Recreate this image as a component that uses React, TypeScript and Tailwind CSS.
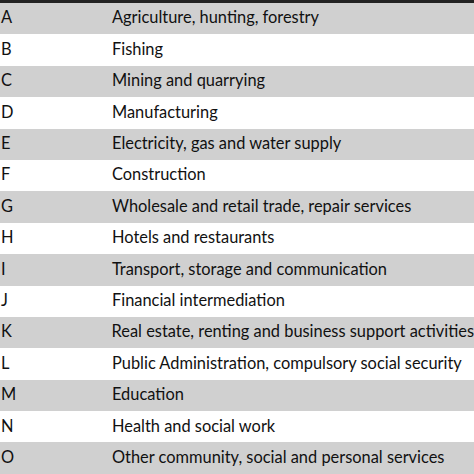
const sectors: [string, string][] = [
  ["A", "Agriculture, hunting, forestry"],
  ["B", "Fishing"],
  ["C", "Mining and quarrying"],
  ["D", "Manufacturing"],
  ["E", "Electricity, gas and water supply"],
  ["F", "Construction"],
  ["G", "Wholesale and retail trade, repair services"],
  ["H", "Hotels and restaurants"],
  ["I", "Transport, storage and communication"],
  ["J", "Financial intermediation"],
  ["K", "Real estate, renting and business support activities"],
  ["L", "Public Administration, compulsory social security"],
  ["M", "Education"],
  ["N", "Health and social work"],
  ["O", "Other community, social and personal services"],
];

export default function App() {
  return (
    <div className="w-[474px] h-[474px] overflow-hidden bg-white text-[#111] font-['Lato',sans-serif] text-[16.4px] leading-none">
      {/* top rule */}
      <div className="h-[3px] bg-[#222]" />

      {sectors.map(([code, name], i) => (
        <div
          key={code}
          className={`flex items-center h-[31.4px] pb-[2px] whitespace-nowrap ${
            i % 2 === 0 ? "bg-[#d0d0d0]" : "bg-white"
          }`}
        >
          <span className="w-[112px] pl-[1px]">{code}</span>
          <span>{name}</span>
        </div>
      ))}
    </div>
  );
}
